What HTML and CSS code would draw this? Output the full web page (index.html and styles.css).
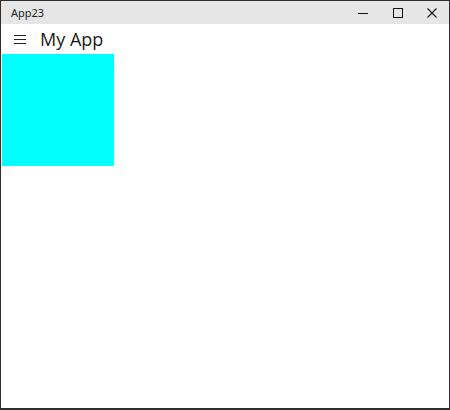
FILE: index.html
```html
<!DOCTYPE html>
<html>
<head>
<meta charset="utf-8">
<link rel="stylesheet" href="styles.css">
</head>
<body>
<div class="window">
  <div class="titlebar">
    <span class="title">App23</span>
    <div class="controls">
      <span class="ctl"><svg width="10" height="10" viewBox="0 0 10 10"><path d="M0 5.5H10" stroke="#111" stroke-width="1"/></svg></span>
      <span class="ctl"><svg width="10" height="10" viewBox="0 0 10 10"><rect x="0.5" y="0.5" width="9" height="9" fill="none" stroke="#111" stroke-width="1"/></svg></span>
      <span class="ctl"><svg width="10" height="10" viewBox="0 0 10 10"><path d="M0.5 0.5L9.5 9.5M9.5 0.5L0.5 9.5" stroke="#111" stroke-width="1.1"/></svg></span>
    </div>
  </div>
  <div class="content">
    <div class="appbar">
      <svg class="hamburger" width="12" height="10" viewBox="0 0 12 10"><path d="M0 1.5H12M0 5.5H12M0 9.5H12" stroke="#222" stroke-width="1"/></svg>
      <span class="apptitle">My App</span>
    </div>
    <div class="square"></div>
  </div>
</div>
</body>
</html>
```
FILE: styles.css
```css
html, body {
  margin: 0;
  padding: 0;
  background: #fff;
}
.window {
  width: 450px;
  height: 410px;
  box-sizing: border-box;
  border: 1px solid #2e2e2e;
  border-bottom-width: 2px;
  display: flex;
  flex-direction: column;
}
.titlebar {
  height: 23px;
  background: #e6e6e6;
  display: flex;
  align-items: center;
  justify-content: space-between;
}
.title {
  font-family: "Noto Sans", "Liberation Sans", sans-serif;
  font-size: 11px;
  color: #222;
  padding-left: 10px;
}
.controls {
  display: flex;
  height: 100%;
}
.ctl {
  width: 34px;
  display: flex;
  align-items: center;
  justify-content: center;
}
.controls .ctl:first-child { width: 36px; }
.content {
  flex: 1;
  background: #fff;
}
.appbar {
  height: 30px;
  display: flex;
  align-items: center;
}
.hamburger {
  margin-left: 13px;
  margin-right: 14px;
}
.apptitle {
  font-family: "Open Sans", "Noto Sans", sans-serif;
  font-weight: 400;
  font-size: 18px;
  color: #1a1a1a;
}
.square {
  width: 112px;
  height: 112px;
  background: #00ffff;
  margin-left: 1px;
}
```
